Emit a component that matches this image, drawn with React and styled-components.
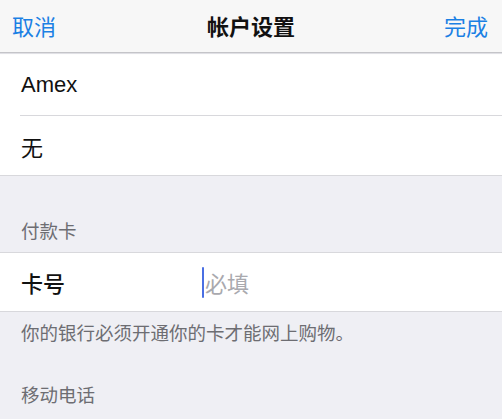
import React from "react";
import styled, { createGlobalStyle } from "styled-components";

const Global = createGlobalStyle`
  html, body { margin: 0; padding: 0; background: #efeff4; }
  body { font-family: "Liberation Sans", "Noto Sans CJK SC", sans-serif; -webkit-font-smoothing: antialiased; }
`;

const Page = styled.div`
  width: 502px;
  height: 419px;
  overflow: hidden;
  background: #efeff4;
  font-family: "Liberation Sans", "Noto Sans CJK SC", sans-serif;
`;

const NavBar = styled.header`
  height: 52px;
  background: #f7f7f7;
  border-bottom: 1px solid #c4c4c8;
  box-shadow: 0 1px 1px rgba(0, 0, 0, 0.06);
  display: grid;
  grid-template-columns: 1fr auto 1fr;
  align-items: center;
  padding: 0 12px 2px 12px;
  box-sizing: border-box;
  height: 53px;
  position: relative;
  z-index: 1;
`;

const NavButton = styled.span`
  color: #1b80e4;
  font-size: 22px;
  justify-self: ${(p) => (p.$end ? "end" : "start")};
  padding-right: ${(p) => (p.$end ? "2px" : "0")};
`;

const NavTitle = styled.span`
  color: #111;
  font-size: 22px;
  font-weight: 600;
`;

const Group = styled.section`
  background: #fff;
  border-top: ${(p) => (p.$noTop ? "none" : "1px solid #d8d8dc")};
  border-bottom: 1px solid #d8d8dc;
  margin-top: ${(p) => p.$mt || 0}px;
`;

const Row = styled.div`
  height: ${(p) => p.$h || 60}px;
  display: flex;
  align-items: center;
  padding-left: 21px;
  font-size: 22px;
  color: #111;
  position: relative;
  & + & {
    border-top: 1px solid #d8d8dc;
    margin-left: 20px;
    padding-left: 1px;
  }
`;

const Label = styled.span`
  width: 181px;
  flex: none;
  font-weight: ${(p) => (p.$strong ? 500 : 400)};
`;

const Field = styled.span`
  display: flex;
  align-items: center;
  color: #a9a9ae;
`;

const Caret = styled.span`
  display: inline-block;
  width: 2px;
  height: 31px;
  background: #4a6fe3;
  border-radius: 1px;
  margin-right: 1px;
`;

const SectionHeader = styled.div`
  height: ${(p) => p.$h}px;
  display: flex;
  align-items: flex-end;
  padding: 0 21px 9px;
  box-sizing: border-box;
  font-size: 18.5px;
  line-height: 22px;
  color: #6d6d72;
`;

const Footer = styled.div`
  padding: 11px 21px 0;
  font-size: 18.5px;
  line-height: 22px;
  color: #6d6d72;
`;

export default function App() {
  return (
    <Page>
      <Global />
      <NavBar>
        <NavButton>取消</NavButton>
        <NavTitle>帐户设置</NavTitle>
        <NavButton $end>完成</NavButton>
      </NavBar>
      <Group $noTop $mt={1}>
        <Row $h={61}>Amex</Row>
        <Row $h={59}>无</Row>
      </Group>
      <SectionHeader $h={76}>付款卡</SectionHeader>
      <Group>
        <Row $h={58}>
          <Label $strong>卡号</Label>
          <Field>
            <Caret />
            必填
          </Field>
        </Row>
      </Group>
      <Footer>你的银行必须开通你的卡才能网上购物。</Footer>
      <SectionHeader $h={71}>移动电话</SectionHeader>
    </Page>
  );
}
